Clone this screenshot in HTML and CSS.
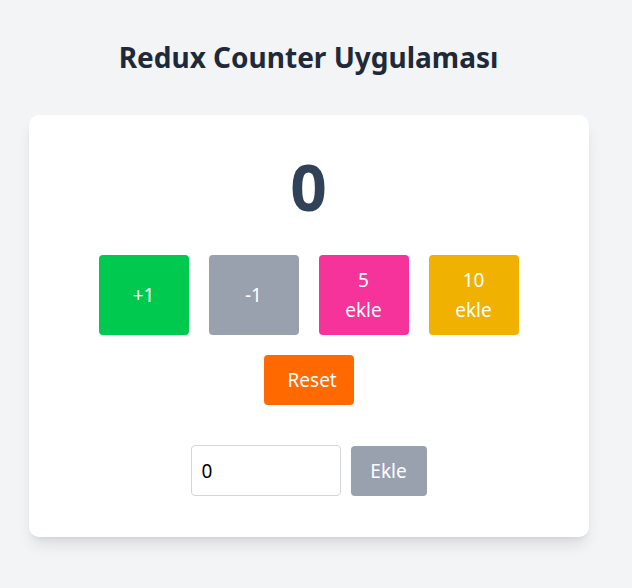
FILE: index.html
```html
<!DOCTYPE html>
<html lang="tr">
<head>
<meta charset="utf-8">
<title>Redux Counter Uygulaması</title>
<link rel="stylesheet" href="styles.css">
</head>
<body>
<div class="page">
  <h1 class="title">Redux Counter Uygulaması</h1>
  <div class="card">
    <div class="count">0</div>
    <div class="row">
      <button class="btn btn-green">+1</button>
      <button class="btn btn-gray">-1</button>
      <button class="btn btn-pink">5 ekle</button>
      <button class="btn btn-yellow">10 ekle</button>
    </div>
    <button class="btn btn-orange btn-reset">Reset</button>
    <div class="form">
      <input class="input" type="text" value="0">
      <button class="btn btn-gray btn-add">Ekle</button>
    </div>
  </div>
</div>
</body>
</html>
```
FILE: styles.css
```css
* { box-sizing: border-box; }
html, body { margin: 0; padding: 0; }
body {
  background: #f3f4f6;
  font-family: "Noto Sans", "Open Sans", sans-serif;
  height: 588px;
  overflow: hidden;
}
.page {
  width: 617px;
  padding-top: 39px;
  display: flex;
  flex-direction: column;
  align-items: center;
}
.title {
  margin: 0;
  font-size: 28px;
  line-height: 36px;
  font-weight: 700;
  color: #1e2939;
}
.card {
  margin-top: 40px;
  width: 560px;
  background: #fff;
  border-radius: 10px;
  box-shadow: 0 10px 15px -3px rgba(0,0,0,0.1), 0 4px 6px -4px rgba(0,0,0,0.1);
  padding: 32px 40px 41px;
  display: flex;
  flex-direction: column;
  align-items: center;
}
.count {
  font-size: 64px;
  line-height: 80px;
  font-weight: 700;
  color: #314158;
}
.row {
  margin-top: 28px;
  display: flex;
  gap: 20px;
}
.btn {
  border: none;
  border-radius: 4px;
  color: #fff;
  font-family: inherit;
  font-size: 19px;
  line-height: 30px;
  width: 90px;
  height: 80px;
  padding: 0 24px;
  cursor: pointer;
}
.btn-green { background: #00c950; }
.btn-gray { background: #99a1af; }
.btn-pink { background: #f6339a; }
.btn-yellow { background: #f0b100; }
.btn-orange { background: #ff6900; }
.btn-reset {
  margin-top: 20px;
  height: 50px;
}
.form {
  margin-top: 40px;
  display: flex;
  gap: 10px;
  align-items: center;
}
.input {
  width: 150px;
  height: 51px;
  border: 1px solid #d1d5dc;
  border-radius: 4px;
  padding: 0 10px;
  font-family: inherit;
  font-size: 19px;
  color: #000;
  background: #fff;
}
.btn-add {
  width: 76px;
  height: 50px;
  padding: 0;
}
```
